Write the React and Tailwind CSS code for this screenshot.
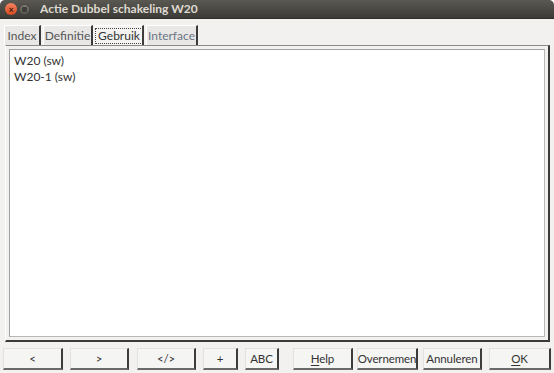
const tabs = [
  { label: "Index", w: "w-[37px]", text: "text-[#555]" },
  { label: "Definitie", w: "w-[50px]", text: "text-[#555]" },
  { label: "Gebruik", w: "w-[49px]", text: "text-[#333]", active: true },
  { label: "Interface", w: "w-[52px]", text: "text-[#6c7584]" },
]

const buttons = [
  { label: "<", w: "w-[60px]", ml: "ml-[3px]" },
  { label: ">", w: "w-[59px]", ml: "ml-[7px]" },
  { label: "</>", w: "w-[59px]", ml: "ml-[8px]" },
  { label: "+", w: "w-[35px]", ml: "ml-[7px]" },
  { label: "ABC", w: "w-[34px]", ml: "ml-[7px]" },
  { label: "Help", w: "w-[60px]", ml: "ml-[14px]", u: 0 },
  { label: "Overnemen", w: "w-[61px]", ml: "ml-[4px]" },
  { label: "Annuleren", w: "w-[59px]", ml: "ml-[5px]" },
  { label: "OK", w: "w-[62px]", ml: "ml-[7px]", u: 0 },
]

const Btn = ({ label, w, ml, u }) => (
  <div
    className={`${w} ${ml} h-[22px] flex items-center justify-center bg-[#f5f5f4] border-t border-l border-t-[#e2e1df] border-l-[#e2e1df] border-r-2 border-b-2 border-r-[#3c3c3c] border-b-[#6a6a6a] text-[11.5px] tracking-[-0.1px] text-[#333] whitespace-nowrap`}
  >
    {u === 0 ? (
      <span>
        <span className="underline underline-offset-2">{label[0]}</span>
        {label.slice(1)}
      </span>
    ) : (
      label
    )}
  </div>
)

export default function App() {
  return (
    <div
      className="w-[554px] h-[373px] bg-[#f2f1f0] flex flex-col overflow-hidden rounded-t-[5px]"
      style={{ fontFamily: 'Lato, "Open Sans", sans-serif' }}
    >
      <div className="h-[19px] shrink-0 flex items-center bg-gradient-to-b from-[#5a5851] to-[#3c3b37] border-b border-[#2f2e2b]">
        <div className="ml-[5px] w-[12px] h-[12px] rounded-full bg-gradient-to-b from-[#f5825f] to-[#d84a1d] flex items-center justify-center text-[#3c1a0a] text-[9px] leading-none font-bold">
          ×
        </div>
        <div className="ml-[2px] w-[11px] h-[11px] rounded-full bg-gradient-to-b from-[#7f7c74] to-[#5a5852] border border-[#48463f] flex items-center justify-center">
          <div className="w-[5px] h-[5px] bg-[#3e3d39] rounded-[1px]" />
        </div>
        <div className="ml-[10px] text-[12px] font-bold text-[#dfdbd2]">
          Actie Dubbel schakeling W20
        </div>
      </div>

      <div className="mt-[6px] ml-[4px] h-[20px] flex items-end">
        {tabs.map((t) => (
          <div
            key={t.label}
            className={`${t.w} h-[20px] mr-[2px] flex items-center justify-center border-l border-t border-r-2 border-l-[#fff] border-t-[#fff] border-r-[#3a3a3a] text-[12px] ${t.text} ${
              t.active ? "bg-[#f4f3f2]" : "bg-[#e8e7e5]"
            }`}
          >
            {t.active ? (
              <span className="px-[2px] leading-[14px] border border-dotted border-[#444]">{t.label}</span>
            ) : (
              t.label
            )}
          </div>
        ))}
      </div>

      <div className="ml-[5px] w-[545px] h-[297px] border-t border-t-[#8a8a8a] border-l border-l-[#fff] border-r-2 border-r-[#3a3a3a] border-b-2 border-b-[#3a3a3a] p-[3px] bg-[#f2f1f0]">
        <div className="w-full h-full bg-white border border-[#b8b7b4] border-t-[#a0a09e] border-l-[#a0a09e] px-[4px] pt-[3px] text-[12px] text-[#333] leading-[16px]">
          <div>W20 (sw)</div>
          <div>W20-1 (sw)</div>
        </div>
      </div>

      <div className="mt-[6px] flex items-start">
        {buttons.map((b) => (
          <Btn key={b.label} {...b} />
        ))}
      </div>
    </div>
  )
}
